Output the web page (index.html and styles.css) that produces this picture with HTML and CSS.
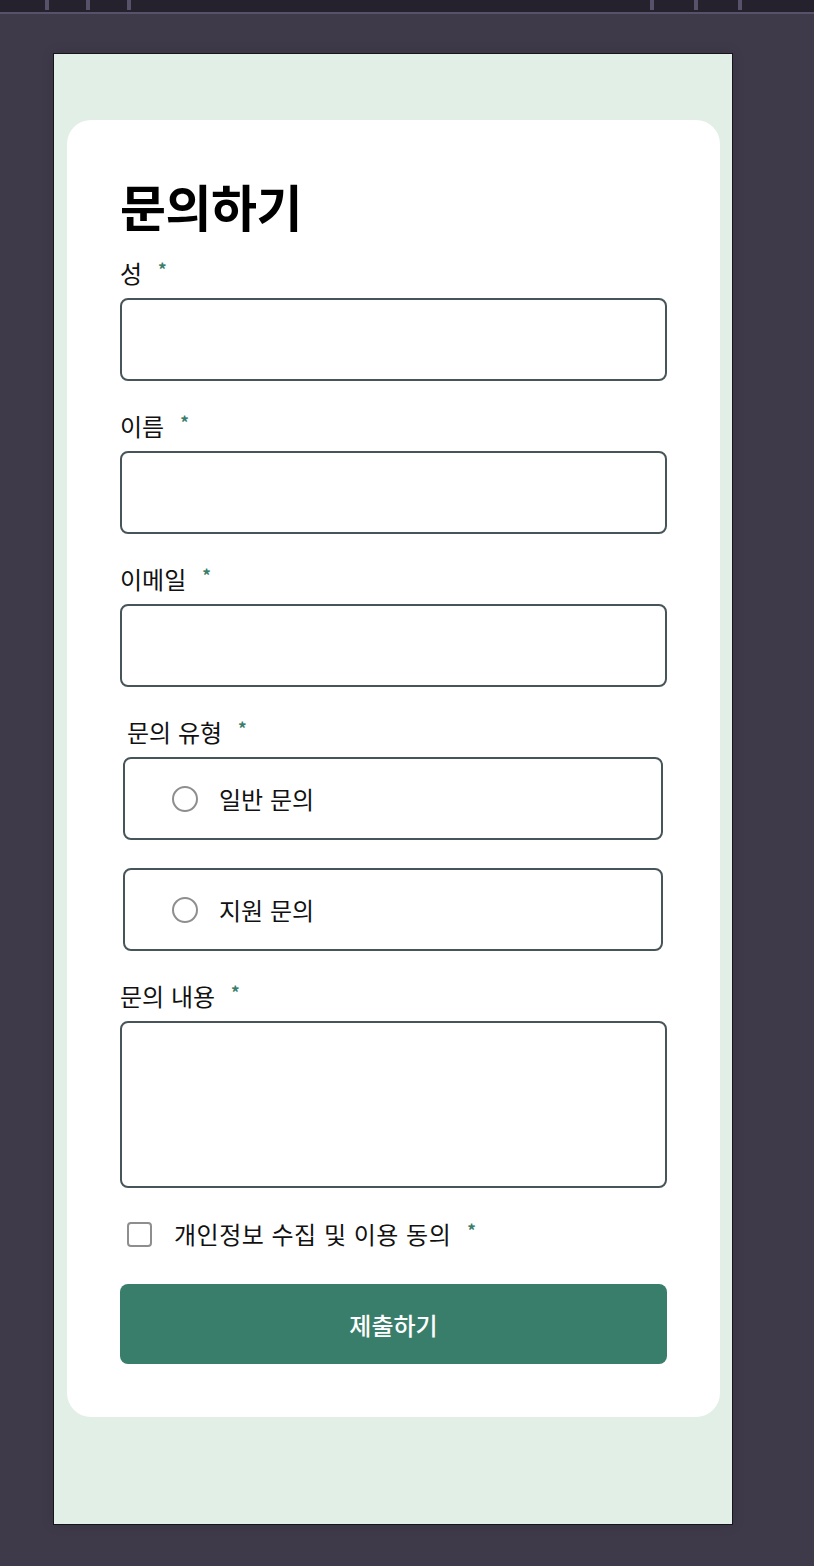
FILE: index.html
```html
<!DOCTYPE html>
<html lang="ko">
<head>
<meta charset="utf-8">
<title>문의하기</title>
<link rel="stylesheet" href="styles.css">
</head>
<body>
<div class="topbar">
  <div class="ticks ticks-left"><span class="tick"></span><span class="tick"></span><span class="tick"></span></div>
  <div class="ticks ticks-right"><span class="tick"></span><span class="tick"></span><span class="tick"></span></div>
</div>
<div class="stage">
  <div class="frame">
    <div class="card">
      <h1 class="title">문의하기</h1>
      <form class="form">
        <div class="field">
          <label class="label">성<span class="req">*</span></label>
          <div class="input"></div>
        </div>
        <div class="field">
          <label class="label">이름<span class="req">*</span></label>
          <div class="input"></div>
        </div>
        <div class="field">
          <label class="label">이메일<span class="req">*</span></label>
          <div class="input"></div>
        </div>
        <div class="field group" role="radiogroup">
          <span class="label legend">문의 유형<span class="req">*</span></span>
          <div class="options">
            <label class="option"><span class="radio"></span><span>일반 문의</span></label>
            <label class="option"><span class="radio"></span><span>지원 문의</span></label>
          </div>
        </div>
        <div class="field">
          <label class="label">문의 내용<span class="req">*</span></label>
          <div class="input textarea"></div>
        </div>
        <label class="agree"><span class="checkbox"></span><span class="agree-text">개인정보 수집 및 이용 동의<span class="req">*</span></span></label>
        <button type="button" class="submit">제출하기</button>
      </form>
    </div>
  </div>
</div>
</body>
</html>
```
FILE: styles.css
```css
html, body {
  margin: 0;
  padding: 0;
}
body {
  background: #3f3a4a;
  font-family: "Noto Sans CJK KR", "Noto Sans", sans-serif;
  color: #111;
  width: 814px;
  height: 1566px;
  overflow: hidden;
}
.topbar {
  height: 12px;
  background: #25222d;
  border-bottom: 2px solid #57516a;
  display: flex;
  justify-content: space-between;
}
.ticks {
  display: flex;
  height: 10px;
}
.ticks-left {
  padding-left: 45px;
  gap: 37px;
}
.ticks-right {
  padding-right: 72px;
  gap: 40px;
}
.tick {
  width: 4px;
  height: 10px;
  background: #57516a;
}
.stage {
  padding: 39px 0 0 53px;
}
.frame {
  width: 653px;
  height: 1404px;
  border: 1px solid #17151b;
  background: #e1efe6;
  box-shadow: 0 0 12px rgba(0, 0, 0, 0.12);
  padding: 66px 12px 0 13px;
}
.card {
  background: #ffffff;
  border-radius: 24px;
  padding: 57px 53px 53px;
  box-sizing: border-box;
  width: 653px;
}
.title {
  margin: 0 0 25px;
  font-size: 50px;
  line-height: 56px;
  font-weight: 700;
  letter-spacing: -0.5px;
  color: #000;
}
.form {
  display: flex;
  flex-direction: column;
  gap: 30px;
  margin: 0;
}
.field {
  display: flex;
  flex-direction: column;
  gap: 10px;
}
.label {
  font-size: 24px;
  line-height: 30px;
  display: block;
  color: #111;
}
.req {
  color: #3a7d6a;
  font-size: 17px;
  font-weight: 700;
  margin-left: 16px;
  vertical-align: 7px;
  line-height: 0;
  letter-spacing: 0;
}
.input {
  height: 83px;
  border: 2px solid #47555a;
  border-radius: 8px;
  box-sizing: border-box;
  background: #fff;
}
.textarea {
  height: 167px;
}
.group {
  padding: 0 4px 0 3px;
}
.legend {
  padding-left: 4px;
}
.options {
  display: flex;
  flex-direction: column;
  gap: 28px;
}
.option {
  height: 83px;
  border: 2px solid #47555a;
  border-radius: 8px;
  box-sizing: border-box;
  display: flex;
  align-items: center;
  padding-left: 47px;
  gap: 21px;
  font-size: 24px;
  line-height: 30px;
  color: #111;
}
.radio {
  width: 26px;
  height: 26px;
  border: 2px solid #8e8e8e;
  border-radius: 50%;
  box-sizing: border-box;
  flex: none;
}
.agree {
  margin-top: 1px;
  display: flex;
  align-items: center;
  height: 30px;
  padding-left: 7px;
  gap: 22px;
  font-size: 24px;
  line-height: 30px;
  color: #111;
}
.agree-text {
  letter-spacing: 0.5px;
}
.checkbox {
  width: 25px;
  height: 25px;
  border: 2px solid #8e8e8e;
  border-radius: 4px;
  box-sizing: border-box;
  flex: none;
}
.submit {
  margin-top: 5px;
  height: 80px;
  border: 0;
  border-radius: 8px;
  background: #397e6a;
  color: #fff;
  font-family: "Noto Sans CJK KR", "Noto Sans", sans-serif;
  font-size: 24px;
  font-weight: 500;
  padding: 0;
}
```
